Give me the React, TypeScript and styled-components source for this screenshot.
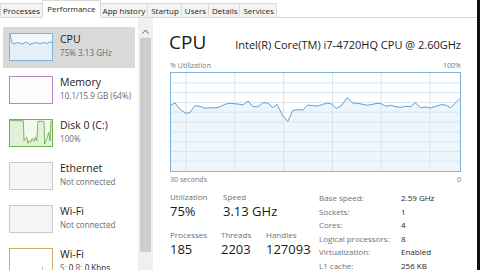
import React from "react";
import styled, { createGlobalStyle } from "styled-components";

const Global = createGlobalStyle`
  html, body { margin: 0; padding: 0; background: #fff; }
  body { font-family: "Open Sans", "Noto Sans", sans-serif; }
`;

const Window = styled.div`
  width: 480px;
  height: 270px;
  box-sizing: border-box;
  border-right: 3px solid #111;
  display: flex;
  flex-direction: column;
  overflow: hidden;
  background: #fff;
  color: #1e1e1e;
  font-family: "Open Sans", "Noto Sans", sans-serif;
`;

const TabBar = styled.div`
  height: 18px;
  flex: none;
  box-sizing: border-box;
  border-bottom: 1px solid #d9d9d9;
  display: flex;
  align-items: flex-end;
`;

const Tab = styled.div<{ $active?: boolean }>`
  position: relative;
  z-index: ${(p) => (p.$active ? 1 : 0)};
  height: ${(p) => (p.$active ? 18 : 15)}px;
  box-sizing: border-box;
  margin: 0 ${(p) => (p.$active ? "-1px" : "0")} -1px;
  padding: 0 ${(p) => (p.$active ? 4 : 2)}px ${(p) => (p.$active ? 2 : 0)}px;
  display: flex;
  align-items: center;
  background: ${(p) => (p.$active ? "#fff" : "#f3f3f3")};
  border: 1px solid #d9d9d9;
  border-left-color: ${(p) => (p.$active ? "#d9d9d9" : "transparent")};
  border-bottom-color: ${(p) => (p.$active ? "#fff" : "#d9d9d9")};
  font-size: 8px;
  color: #1e1e1e;
  white-space: nowrap;
  &:first-child { border-left-color: #d9d9d9; }
`;

const Body = styled.div`
  flex: 1;
  min-height: 0;
  display: flex;
`;

const Sidebar = styled.div`
  width: 138px;
  flex: none;
  box-sizing: border-box;
  padding: 9px 0 0 3px;
  display: flex;
  flex-direction: column;
  gap: 2px;
  overflow: hidden;
`;

const Item = styled.div<{ $selected?: boolean }>`
  width: 132px;
  height: 41px;
  flex: none;
  box-sizing: border-box;
  padding: 6px 0 0 6px;
  display: flex;
  gap: 7px;
  background: ${(p) => (p.$selected ? "#d9d9d9" : "transparent")};
`;

const Thumb = styled.div<{ $border: string; $bg: string }>`
  width: 44px;
  height: 28px;
  flex: none;
  box-sizing: border-box;
  border: 1px solid ${(p) => p.$border};
  background: ${(p) => p.$bg};
  svg { display: block; width: 42px; height: 26px; }
`;

const ItemText = styled.div`
  margin-top: -1px;
  display: flex;
  flex-direction: column;
`;

const ItemTitle = styled.div`
  font-size: 10.5px;
  line-height: 15px;
  color: #1a1a1a;
`;

const ItemSub = styled.div`
  font-size: 8.1px;
  line-height: 11px;
  color: #6a6a6a;
  white-space: nowrap;
  b { font-weight: 400; color: #1e1e1e; }
`;

const ScrollTrack = styled.div`
  width: 15px;
  flex: none;
  background: #f0f0f0;
  display: flex;
  flex-direction: column;
  align-items: center;
`;

const ScrollArrow = styled.div`
  height: 20px;
  box-sizing: border-box;
  padding-bottom: 4px;
  display: flex;
  align-items: flex-end;
  justify-content: center;
`;

const ScrollThumb = styled.div`
  width: 11px;
  height: 214px;
  background: #cdcdcd;
`;

const Main = styled.div`
  flex: 1;
  min-width: 0;
  box-sizing: border-box;
  padding: 12px 16px 0 17px;
  display: flex;
  flex-direction: column;
`;

const Header = styled.div`
  height: 24px;
  display: flex;
  align-items: baseline;
  justify-content: space-between;
`;

const BigTitle = styled.div`
  font-size: 19px;
  line-height: 24px;
  margin-left: -1px;
  color: #1a1a1a;
`;

const CpuName = styled.div`
  font-size: 11px;
  line-height: 24px;
  color: #1a1a1a;
  white-space: nowrap;
`;

const AxisRow = styled.div<{ $top: number }>`
  margin-top: ${(p) => p.$top}px;
  height: 10px;
  display: flex;
  justify-content: space-between;
  align-items: center;
  font-size: 7.1px;
  color: #7a7a7a;
`;

const ChartFrame = styled.div`
  margin-top: 2px;
  height: 100px;
  flex: none;
  box-sizing: border-box;
  border: 1px solid #80b6da;
  background: #fff;
  svg { display: block; width: 100%; height: 100%; }
`;

const Bottom = styled.div`
  margin-top: 7px;
  display: flex;
`;

const Stats = styled.div`
  width: 149px;
  flex: none;
  display: flex;
  flex-direction: column;
  gap: 8px;
`;

const StatRow = styled.div`
  display: flex;
`;

const Stat = styled.div<{ $w?: number }>`
  width: ${(p) => (p.$w ? `${p.$w}px` : "auto")};
  flex: none;
  display: flex;
  flex-direction: column;
`;

const StatLabel = styled.div`
  font-size: 8px;
  line-height: 11px;
  color: #717171;
  white-space: nowrap;
`;

const StatValue = styled.div`
  font-size: 13px;
  line-height: 19px;
  color: #1a1a1a;
  white-space: nowrap;
`;

const Details = styled.div`
  display: grid;
  grid-template-columns: 82px auto;
  grid-auto-rows: 13.5px;
  align-items: center;
  font-size: 8px;
  white-space: nowrap;
`;

const DLabel = styled.div`
  color: #717171;
`;

const DValue = styled.div`
  color: #1e1e1e;
`;

const chartPts: [number, number][] = [
  [0, 32], [4, 30], [9, 36.3], [14.7, 40.3], [19, 39.7], [24, 32.7], [29, 33.3],
  [34, 35.3], [39, 34.7], [44, 35], [49, 34], [54, 31.3], [59, 30.3], [64, 30.7],
  [69, 31.3], [72.3, 32], [77.3, 28], [82.3, 33.7], [87.3, 33.7], [92.3, 29.7],
  [97.3, 30], [102.3, 34.7], [106.3, 31.3], [112.3, 43], [117.3, 48.3], [122.3, 37.3],
  [127.3, 36.7], [132.3, 37], [137.3, 32], [142.3, 32.7], [147.3, 33], [152.3, 31.3],
  [157.3, 30], [161.7, 31.3], [165.7, 35.3], [170.7, 33], [176.7, 24.7], [182.3, 30],
  [187.3, 30.3], [192.3, 31.3], [197.3, 32.3], [202.3, 31.3], [207.3, 30.3], [210.7, 30.7],
  [215.7, 33.3], [220.7, 32.3], [225.7, 33.7], [230.7, 34.3], [235.7, 33.3], [240.7, 33.7],
  [245, 29.7], [250.7, 34.7], [255.7, 34], [260.7, 35], [265.7, 33.3], [270.7, 31.7],
  [275.7, 32], [280.7, 34.7], [285.7, 29.7], [290, 25.3],
];

const toStr = (pts: [number, number][]) => pts.map(([x, y]) => `${x},${y}`).join(" ");

const CpuChart = () => {
  const W = 290;
  const H = 98;
  const vlines = [15, 64, 113, 162, 211, 260];
  const hlines = [1, 2, 3, 4, 5, 6, 7, 8, 9].map((i) => (i * H) / 10);
  return (
    <svg viewBox={`0 0 ${W} ${H}`} preserveAspectRatio="none">
      <polygon points={`${toStr(chartPts)} ${W},${H} 0,${H}`} fill="#eef5fb" />
      {vlines.map((x) => (
        <line key={`v${x}`} x1={x} y1={0} x2={x} y2={H} stroke="#d6e6f2" strokeWidth={1} />
      ))}
      {hlines.map((y) => (
        <line key={`h${y}`} x1={0} y1={y} x2={W} y2={y} stroke="#d6e6f2" strokeWidth={1} />
      ))}
      <polyline points={toStr(chartPts)} fill="none" stroke="#5f9fca" strokeWidth={1} />
    </svg>
  );
};

const cpuThumbPts: [number, number][] = [
  0, 9, 10, 9, 8.5, 9.5, 10, 9, 8, 9, 11, 9, 9.5, 8.5, 9, 10, 9, 8.5, 9.5, 9, 8, 8.5,
].map((y, i) => [i * 2, y] as [number, number]);

const diskPts: [number, number][] = [
  [0, 0.7], [13.3, 0.7], [14, 20.7], [15.3, 19], [16.7, 17.3], [18, 23.3], [19.3, 20.7],
  [20.7, 22.3], [22.3, 18.3], [24, 21.3], [25.3, 17.3], [26.7, 20.7], [28, 1.3], [34, 1.3],
  [34.7, 24], [36, 20.7], [37.3, 17.3], [38.7, 12.3], [40, 20.7], [41, 1.3], [42, 1.3],
];

const CpuThumb = () => (
  <svg viewBox="0 0 42 26">
    <polygon points={`${toStr(cpuThumbPts)} 42,26 0,26`} fill="#e4eff8" />
    <polyline points={toStr(cpuThumbPts)} fill="none" stroke="#4f92c2" strokeWidth={0.8} />
  </svg>
);

const DiskThumb = () => (
  <svg viewBox="0 0 42 26">
    <polygon points={`${toStr(diskPts)} 42,26 0,26`} fill="#e2f1d8" />
    <polyline points={toStr(diskPts)} fill="none" stroke="#5fa83a" strokeWidth={0.8} />
  </svg>
);

const WifiThumb = () => (
  <svg viewBox="0 0 42 26">
    <line x1={32.5} y1={18} x2={32.5} y2={26} stroke="#c9a06a" strokeWidth={0.8} />
  </svg>
);

const EmptyThumb = () => <svg viewBox="0 0 42 26" />;

type SideItem = {
  title: string;
  sub: React.ReactNode;
  border: string;
  bg: string;
  graph: React.ReactNode;
  selected?: boolean;
};

const items: SideItem[] = [
  { title: "CPU", sub: "75%  3.13 GHz", border: "#7fb3d8", bg: "#f1f7fb", graph: <CpuThumb />, selected: true },
  { title: "Memory", sub: "10.1/15.9 GB (64%)", border: "#b787c9", bg: "#fdfbfe", graph: <EmptyThumb /> },
  { title: "Disk 0 (C:)", sub: "100%", border: "#74b352", bg: "#f3f9ef", graph: <DiskThumb /> },
  { title: "Ethernet", sub: "Not connected", border: "#c9c9c9", bg: "#f5f5f5", graph: <EmptyThumb /> },
  { title: "Wi-Fi", sub: "Not connected", border: "#c9c9c9", bg: "#f5f5f5", graph: <EmptyThumb /> },
  {
    title: "Wi-Fi",
    sub: (
      <>
        S: <b>0</b> R: <b>0 Kbps</b>
      </>
    ),
    border: "#d2a86e",
    bg: "#ffffff",
    graph: <WifiThumb />,
  },
];

const tabs = ["Processes", "Performance", "App history", "Startup", "Users", "Details", "Services"];

const details: [string, string][] = [
  ["Base speed:", "2.59 GHz"],
  ["Sockets:", "1"],
  ["Cores:", "4"],
  ["Logical processors:", "8"],
  ["Virtualization:", "Enabled"],
  ["L1 cache:", "256 KB"],
];

export default function App() {
  return (
    <>
      <Global />
      <Window>
        <TabBar>
          {tabs.map((t) => (
            <Tab key={t} $active={t === "Performance"}>
              {t}
            </Tab>
          ))}
        </TabBar>
        <Body>
          <Sidebar>
            {items.map((it, i) => (
              <Item key={i} $selected={it.selected}>
                <Thumb $border={it.border} $bg={it.bg}>
                  {it.graph}
                </Thumb>
                <ItemText>
                  <ItemTitle>{it.title}</ItemTitle>
                  <ItemSub>{it.sub}</ItemSub>
                </ItemText>
              </Item>
            ))}
          </Sidebar>
          <ScrollTrack>
            <ScrollArrow>
              <svg width="7" height="5" viewBox="0 0 7 5">
                <polyline points="0.5,4.5 3.5,1 6.5,4.5" fill="none" stroke="#606060" strokeWidth={1} />
              </svg>
            </ScrollArrow>
            <ScrollThumb />
          </ScrollTrack>
          <Main>
            <Header>
              <BigTitle>CPU</BigTitle>
              <CpuName>Intel(R) Core(TM) i7-4720HQ CPU @ 2.60GHz</CpuName>
            </Header>
            <AxisRow $top={6}>
              <span>% Utilization</span>
              <span>100%</span>
            </AxisRow>
            <ChartFrame>
              <CpuChart />
            </ChartFrame>
            <AxisRow $top={2}>
              <span>30 seconds</span>
              <span>0</span>
            </AxisRow>
            <Bottom>
              <Stats>
                <StatRow>
                  <Stat $w={53}>
                    <StatLabel>Utilization</StatLabel>
                    <StatValue>75%</StatValue>
                  </Stat>
                  <Stat>
                    <StatLabel>Speed</StatLabel>
                    <StatValue>3.13 GHz</StatValue>
                  </Stat>
                </StatRow>
                <StatRow>
                  <Stat $w={51}>
                    <StatLabel>Processes</StatLabel>
                    <StatValue>185</StatValue>
                  </Stat>
                  <Stat $w={45}>
                    <StatLabel>Threads</StatLabel>
                    <StatValue>2203</StatValue>
                  </Stat>
                  <Stat>
                    <StatLabel>Handles</StatLabel>
                    <StatValue>127093</StatValue>
                  </Stat>
                </StatRow>
                <StatRow>
                  <Stat>
                    <StatLabel>Up time</StatLabel>
                  </Stat>
                </StatRow>
              </Stats>
              <Details>
                {details.map(([k, v]) => (
                  <React.Fragment key={k}>
                    <DLabel>{k}</DLabel>
                    <DValue>{v}</DValue>
                  </React.Fragment>
                ))}
              </Details>
            </Bottom>
          </Main>
        </Body>
      </Window>
    </>
  );
}
